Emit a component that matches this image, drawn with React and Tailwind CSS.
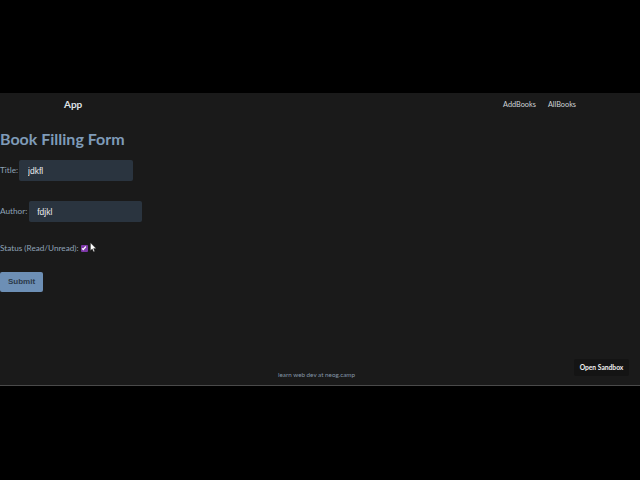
export default function App() {
  return (
    <div className="h-[480px] w-[640px] overflow-hidden bg-black pt-[93px] font-['Lato',sans-serif]">
      <div className="relative flex h-[293px] flex-col border-b border-[#4a4a4a] bg-[#1a1a1a]">
        <nav className="flex h-[23px] items-center justify-between pl-[64px] pr-[64px]">
          <span className="text-[10px] font-bold text-[#dfe3e8]">App</span>
          <div className="mt-[1px] flex gap-3 text-[7.3px] text-[#cfd3d9]">
            <a>AddBooks</a>
            <a>AllBooks</a>
          </div>
        </nav>

        <h1 className="mt-[12px] mb-[1px] text-[16px] leading-[22px] font-bold text-[#7f9bb8]">Book Filling Form</h1>

        <form className="flex flex-col text-[8.2px] text-[#8fa3b8]">
          <label className="mt-[9px] flex h-[21px] items-center gap-[1px]">
            <span className="mb-[1px]">Title:</span>
            <input
              readOnly
              value="jdkfl"
              className="h-[21px] w-[114px] rounded-[2px] bg-[#2a343f] pl-[9px] font-['Liberation_Sans',sans-serif] text-[8.5px] text-[#e8eaed]"
            />
          </label>
          <label className="mt-[20px] flex h-[21px] items-center gap-[2px]">
            <span className="mb-[1px]">Author:</span>
            <input
              readOnly
              value="fdjkl"
              className="h-[21px] w-[113px] rounded-[2px] bg-[#2a343f] pl-[8px] font-['Liberation_Sans',sans-serif] text-[8.5px] text-[#e8eaed]"
            />
          </label>
          <label className="mt-[19px] flex h-[16px] items-center gap-[2px]">
            <span className="mb-[2px]">Status (Read/Unread):</span>
            <span className="mb-[2px] flex h-[7px] w-[7px] items-center justify-center rounded-[1px] bg-[#7d38a8]">
              <svg viewBox="0 0 8 8" className="h-[6px] w-[6px]" fill="none" stroke="#ffffff" strokeWidth="1.6">
                <path d="M1.5 4.5 3 6 6.5 2" />
              </svg>
            </span>
          </label>
          <button
            type="button"
            className="mt-[15px] h-[20px] w-[43px] rounded-[2px] bg-[#6d8fb5] font-['Liberation_Sans',sans-serif] text-[8px] font-bold text-[#2c3a4a]"
          >
            Submit
          </button>
        </form>

        <p className="mt-auto mb-[6px] pl-[278px] text-[6.3px] text-[#8497a8]">learn web dev at neog.camp</p>

        <div className="absolute top-[266px] left-[574px] flex h-[17px] w-[55px] items-center justify-center rounded-[2px] bg-[#141414] text-[6.7px] font-bold text-[#f0f0f0]">
          Open Sandbox
        </div>

        <svg viewBox="0 0 8 12" className="absolute top-[149px] left-[90px] h-[11px] w-[7px]">
          <path d="M0.5 0.5V9.5L2.6 7.6 4 10.8 5.4 10.2 4.1 7.2H7Z" fill="#ffffff" stroke="#222222" strokeWidth="0.5" />
        </svg>
      </div>
    </div>
  );
}
